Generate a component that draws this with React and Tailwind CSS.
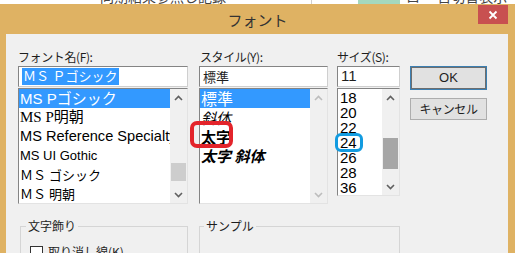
import React from 'react';

const Chevron = ({ up, color = '#606060' }) => (
  <svg width="9" height="6" viewBox="0 0 9 6">
    <polyline
      points={up ? '1,5 4.5,1.5 8,5' : '1,1 4.5,4.5 8,1'}
      fill="none"
      stroke={color}
      strokeWidth="1.6"
    />
  </svg>
);

const ScrollBar = ({ thumbTop, thumbHeight, thumbColor, arrowColor }) => (
  <div className="w-[17px] shrink-0 flex flex-col bg-[#f0f0f0]">
    <div className="h-[17px] flex items-center justify-center">
      <Chevron up color={arrowColor} />
    </div>
    <div className="flex-1" style={{ paddingTop: thumbTop }}>
      {thumbHeight ? (
        <div className={`w-[15px] mx-auto ${thumbColor}`} style={{ height: thumbHeight }} />
      ) : null}
    </div>
    <div className="h-[17px] flex items-center justify-center">
      <Chevron color={arrowColor} />
    </div>
  </div>
);

const fonts = [
  { label: 'MS Pゴシック', cls: "font-['Liberation_Sans','Noto_Sans_CJK_JP',sans-serif] text-[15px]", selected: true },
  { label: 'MS P明朝', cls: "font-['Liberation_Serif','Noto_Sans_CJK_JP',serif] text-[15px]" },
  { label: 'MS Reference Specialty', cls: "font-['Liberation_Sans',sans-serif] text-[14.6px]" },
  { label: 'MS UI Gothic', cls: "font-['Liberation_Sans',sans-serif] text-[13px]" },
  { label: 'ＭＳ ゴシック', cls: "font-['Noto_Sans_CJK_JP',sans-serif] text-[13px]" },
  { label: 'ＭＳ 明朝', cls: "font-['Noto_Sans_CJK_JP',serif] text-[13px]" },
];

const styles = [
  { label: '標準', cls: 'text-[16px]', selected: true },
  { label: '斜体', cls: 'italic text-[15px]' },
  { label: '太字', cls: 'font-bold text-[15px]', marked: true },
  { label: '太字 斜体', cls: 'font-bold italic text-[15px]' },
];

const sizes = ['18', '20', '22', '24', '26', '28', '36'];

export default function App() {
  return (
    <div className="w-[515px] h-[253px] overflow-hidden bg-[#dfb263] flex flex-col font-['Noto_Sans_CJK_JP',sans-serif] text-[#1e1e1e]">
      {/* spreadsheet behind the dialog */}
      <div className="h-[4px] shrink-0 overflow-hidden bg-white flex text-[14px] leading-[14px] text-[#444]">
        <div className="w-[219px] border-r border-[#cfcfcf] pl-[100px] whitespace-nowrap">
          <div className="-mt-[11px]">同期結果参照し記録</div>
        </div>
        <div className="w-[93px] border-r border-[#cfcfcf]" />
        <div className="w-[46px]" />
        <div className="w-[42px] bg-[#a4d8bd]" />
        <div className="flex-1 pl-[6px] whitespace-nowrap">
          <div className="-mt-[11px]">ロ 一日切替表示</div>
        </div>
      </div>

      {/* title bar */}
      <div className="h-[30px] shrink-0 grid grid-cols-[1fr_auto_1fr] items-start">
        <div />
        <div className="mt-[6px] text-[15px] leading-[20px] text-[#333]">フォント</div>
        <div className="justify-self-end mr-[7px] mt-[1px] w-[30px] h-[19px] bg-[#c85050] flex items-center justify-center">
          <svg width="10" height="10" viewBox="0 0 10 10">
            <path d="M1.5 1.5 L8.5 8.5 M8.5 1.5 L1.5 8.5" stroke="#fff" strokeWidth="1.8" />
          </svg>
        </div>
      </div>

      {/* dialog body */}
      <div className="flex-1 ml-[6px] mr-[7px] bg-[#f0f0f0] pl-[12px] pt-[15px]">
        <div className="flex items-start">
          {/* font name */}
          <div className="w-[170px] shrink-0">
            <div className="h-[16px] text-[12px] leading-[16px] tracking-[-0.4px]">フォント名(F):</div>
            <div className="h-[21px] mt-[1px] bg-white border border-[#848484] border-r-[#cfcfcf] border-b-[#cfcfcf] flex items-center pl-[3px]">
              <span className="bg-[#3399ff] text-white text-[13px] leading-[17px] px-[1px] font-['Liberation_Sans','Noto_Sans_CJK_JP',sans-serif]">
                ＭＳ Ｐゴシック
              </span>
            </div>
            <div className="h-[116px] mt-[1px] bg-white border border-[#848484] border-r-[#e3e3e3] border-b-[#e3e3e3] flex">
              <div className="flex-1 min-w-0 overflow-hidden">
                {fonts.map((f) => (
                  <div
                    key={f.label}
                    className={`h-[19px] pl-[1px] whitespace-nowrap leading-[19px] ${f.cls} ${
                      f.selected ? 'bg-[#3399ff] text-white' : 'text-black'
                    }`}
                  >
                    {f.label}
                  </div>
                ))}
              </div>
              <ScrollBar thumbTop={57} thumbHeight={18} thumbColor="bg-[#cdcdcd]" arrowColor="#606060" />
            </div>
          </div>

          {/* style */}
          <div className="w-[129px] shrink-0 ml-[11px]">
            <div className="h-[16px] text-[12px] leading-[16px] tracking-[-0.4px] pl-[1px]">スタイル(Y):</div>
            <div className="h-[21px] mt-[1px] bg-white border border-[#848484] border-r-[#cfcfcf] border-b-[#cfcfcf] flex items-center pl-[3px] text-[13px]">
              標準
            </div>
            <div className="h-[116px] mt-[1px] bg-white border border-[#848484] border-r-[#e3e3e3] border-b-[#e3e3e3] flex">
              <div className="flex-1 min-w-0">
                {styles.map((s) => (
                  <div
                    key={s.label}
                    className={`relative h-[19px] pl-[1px] whitespace-nowrap leading-[19px] ${s.cls} ${
                      s.selected ? 'bg-[#3399ff] text-white' : 'text-black'
                    }`}
                  >
                    {s.label}
                    {s.marked && (
                      <span className="absolute left-[-10px] top-[-6px] w-[43px] h-[27px] border-[4px] border-[#e3242b] rounded-[7px]" />
                    )}
                  </div>
                ))}
              </div>
              <ScrollBar arrowColor="#bdbdbd" />
            </div>
          </div>

          {/* size */}
          <div className="w-[63px] shrink-0 ml-[9px]">
            <div className="h-[16px] text-[12px] leading-[16px] tracking-[-0.4px]">サイズ(S):</div>
            <div className="h-[21px] mt-[1px] bg-white border border-[#848484] border-r-[#cfcfcf] border-b-[#cfcfcf] flex items-center pl-[3px] text-[15px] font-['Liberation_Sans',sans-serif]">
              11
            </div>
            <div className="h-[108px] mt-[1px] bg-white border border-[#848484] border-r-[#e3e3e3] border-b-[#e3e3e3] flex">
              <div className="flex-1 min-w-0 pt-[1px]">
                {sizes.map((s) => (
                  <div
                    key={s}
                    className="relative h-[15px] pl-[2px] text-[15px] leading-[15px] font-['Liberation_Sans',sans-serif] text-black"
                  >
                    {s}
                    {s === '24' && (
                      <span className="absolute left-[-3px] top-[-2px] w-[28px] h-[19px] border-[3px] border-[#129be0] rounded-[6px]" />
                    )}
                  </div>
                ))}
              </div>
              <ScrollBar thumbTop={32} thumbHeight={31} thumbColor="bg-[#a6a6a6]" arrowColor="#606060" />
            </div>
          </div>

          {/* buttons */}
          <div className="w-[77px] shrink-0 ml-[10px] pt-[17px] flex flex-col">
            <button className="h-[24px] bg-[#e1e1e1] border border-[#3c7fb1] outline outline-1 -outline-offset-2 outline-[#6d6d6d] text-[13px] font-['Liberation_Sans',sans-serif]">
              OK
            </button>
            <button className="h-[22px] mt-[8px] bg-[#e1e1e1] border border-[#adadad] text-[12px] tracking-[-0.4px]">
              キャンセル
            </button>
          </div>
        </div>

        {/* group boxes */}
        <div className="flex mt-[14px]">
          <fieldset className="ml-[2px] w-[168px] h-[60px] border border-[#d5d5d5]">
            <legend className="ml-[5px] px-[2px] text-[12px] leading-[16px]">文字飾り</legend>
            <div className="flex items-center pl-[9px] pt-[10px]">
              <span className="w-[13px] h-[13px] bg-white border border-[#333]" />
              <span className="ml-[5px] text-[12px] leading-[16px]">取り消し線(K)</span>
            </div>
          </fieldset>
          <fieldset className="ml-[11px] w-[201px] h-[60px] border border-[#d5d5d5]">
            <legend className="ml-[4px] px-[2px] text-[12px] leading-[16px]">サンプル</legend>
          </fieldset>
        </div>
      </div>
    </div>
  );
}
